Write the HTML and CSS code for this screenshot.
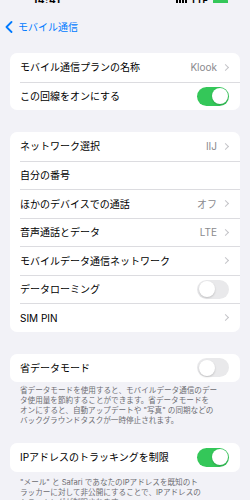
FILE: index.html
```html
<!DOCTYPE html>
<html lang="ja">
<head>
<meta charset="utf-8">
<link rel="stylesheet" href="styles.css">
</head>
<body>
<div class="status">
  <span class="time">14:41</span>
  <span class="status-right">
    <span class="bars"><i></i><i></i><i></i><i></i></span>
    <span class="net">LTE</span>
    <span class="battery"></span>
  </span>
</div>
<div class="nav">
  <svg class="back-icon" width="8" height="12" viewBox="0 0 8 12"><path d="M6.5 1 L1.5 6 L6.5 11" fill="none" stroke="#007aff" stroke-width="1.8" stroke-linecap="round" stroke-linejoin="round"/></svg>
  <span class="back-text">モバイル通信</span>
</div>

<div class="card first">
  <div class="row"><span class="label">モバイル通信プランの名称</span><span class="value">Klook</span><span class="chev"></span></div>
  <div class="row"><span class="label">この回線をオンにする</span><span class="toggle on"></span></div>
</div>

<div class="card">
  <div class="row"><span class="label">ネットワーク選択</span><span class="value">IIJ</span><span class="chev"></span></div>
  <div class="row"><span class="label">自分の番号</span></div>
  <div class="row"><span class="label">ほかのデバイスでの通話</span><span class="value">オフ</span><span class="chev"></span></div>
  <div class="row"><span class="label">音声通話とデータ</span><span class="value">LTE</span><span class="chev"></span></div>
  <div class="row"><span class="label">モバイルデータ通信ネットワーク</span><span class="chev"></span></div>
  <div class="row"><span class="label">データローミング</span><span class="toggle"></span></div>
  <div class="row"><span class="label">SIM PIN</span><span class="chev"></span></div>
</div>

<div class="card">
  <div class="row"><span class="label">省データモード</span><span class="toggle"></span></div>
</div>
<p class="footer">省データモードを使用すると、モバイルデータ通信のデー<br>タ使用量を節約することができます。省データモードを<br>オンにすると、自動アップデートや "写真" の同期などの<br>バックグラウンドタスクが一時停止されます。</p>

<div class="card card4">
  <div class="row"><span class="label">IPアドレスのトラッキングを制限</span><span class="toggle on"></span></div>
</div>
<p class="footer footer2">"メール" と Safari であなたのIPアドレスを既知のト<br>ラッカーに対して非公開にすることで、IPアドレスの<br>トラッキングが制限されます。</p>
</body>
</html>
```

FILE: styles.css
```css
html, body {
  margin: 0;
  padding: 0;
  background: #f2f2f7;
}
body {
  font-family: "Inter", "Noto Sans CJK JP", sans-serif;
  color: #000;
  width: 250px;
  height: 500px;
  overflow: hidden;
}
.status {
  height: 3px;
  overflow: hidden;
  display: flex;
  align-items: flex-end;
  justify-content: space-between;
  padding: 0 22px 0 33px;
}
.time {
  font-size: 10px;
  font-weight: 700;
  line-height: 12px;
  height: 12px;
  margin-bottom: -3px;
  letter-spacing: 0.5px;
}
.status-right {
  display: flex;
  align-items: flex-end;
  gap: 5px;
  margin-bottom: -3px;
}
.bars {
  display: flex;
  align-items: flex-end;
  gap: 1px;
}
.bars i {
  display: block;
  width: 2px;
  height: 8px;
  background: #000;
}
.net {
  font-size: 9px;
  font-weight: 700;
  line-height: 10px;
}
.battery {
  width: 15px;
  height: 7px;
  border-radius: 2px;
  background: #34c759;
}
.nav {
  display: flex;
  align-items: center;
  height: 25px;
  margin-top: 11px;
  padding-left: 5px;
  gap: 5px;
}
.back-icon {
  display: block;
}
.back-text {
  font-size: 10px;
  color: #007aff;
  line-height: 12px;
  margin-top: 1px;
}
.card {
  margin: 0 10px;
  background: #fff;
  border-radius: 7px;
  overflow: hidden;
}
.card.first {
  margin-top: 14px;
}
.card + .card {
  margin-top: 22px;
}
.row {
  display: flex;
  align-items: center;
  height: 28.5px;
  margin-left: 10px;
  padding-right: 11px;
  box-sizing: border-box;
}
.row + .row {
  border-top: 0.5px solid #dcdce0;
}
.label {
  flex: 1;
  font-size: 10px;
  line-height: 12px;
  white-space: nowrap;
}
.value {
  font-size: 10px;
  color: #8a8a8e;
  line-height: 12px;
  margin-right: 6px;
}
.chev {
  width: 4px;
  height: 4px;
  border-top: 1.1px solid #c4c4c8;
  border-right: 1.1px solid #c4c4c8;
  transform: rotate(45deg);
  margin-right: 1px;
}
.toggle {
  position: relative;
  width: 32px;
  height: 19px;
  border-radius: 10px;
  background: #e9e9eb;
  flex: none;
}
.toggle::after {
  content: "";
  position: absolute;
  top: 1.5px;
  left: 1.5px;
  width: 16px;
  height: 16px;
  border-radius: 50%;
  background: #fff;
  box-shadow: 0 1px 2px rgba(0,0,0,0.18);
}
.toggle.on {
  background: #34c759;
}
.toggle.on::after {
  left: 14.5px;
}
.footer {
  margin: 0;
  padding: 4px 20px 0 20px;
  font-size: 7.6px;
  line-height: 10px;
  color: #6d6d72;
  white-space: nowrap;
}
.card4 {
  margin-top: 17px;
}
.footer2 {
  padding-top: 6px;
}
```
